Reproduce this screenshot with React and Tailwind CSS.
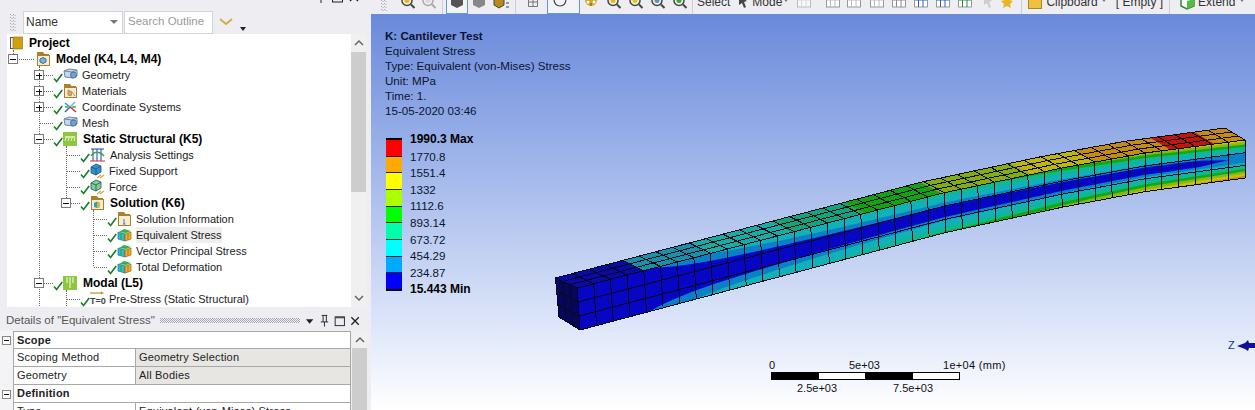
import React from "react";

const CP = [[0,577,288],[0.1213,658,267],[0.548,943,193],[0.726,1062,168],[0.85,1145,153],[1,1245,140]];
function F(t){
  for(let i=0;i<CP.length-1;i++){
    const a=CP[i],b=CP[i+1];
    if(t<=b[0]){const k=(t-a[0])/(b[0]-a[0]);return [a[1]+k*(b[1]-a[1]),a[2]+k*(b[2]-a[2])];}
  }
  return [1245,140];
}
const B=t=>{const p=F(t);return [p[0]-21.5+1.5*t,p[1]-10-2*t];};
const G=t=>{const p=F(t);return [p[0]+3-3*t,p[1]+42-4*t];};
const mix=(a,b,k)=>[a[0]+(b[0]-a[0])*k,a[1]+(b[1]-a[1])*k];
const fr=(t,v)=>mix(F(t),G(t),v);
const tp=(t,u)=>mix(B(t),F(t),u);
const LV=[[0,0.2],[0.1,1],[0.2,2],[0.32,3],[0.43,4],[0.546,5],[0.68,6],[0.775,7],[0.888,8],[1,9]];
function M(t){
  for(let i=0;i<LV.length-1;i++){
    const a=LV[i],b=LV[i+1];
    if(t<=b[0])return a[1]+(t-a[0])/(b[0]-a[0])*(b[1]-a[1]);
  }
  return 9;
}
const pts=a=>a.map(p=>p[0].toFixed(1)+","+p[1].toFixed(1)).join(" ");
const FRONT=["#0606c4","#0a80c8","#12b0b8","#10b890","#10a814","#88b810","#c8c010","#d08a10","#c81a10"];
const TOP=["#0a0aa8","#1a90a8","#17aca4","#14a47c","#12a212","#85ac10","#c0b40e","#c48c10","#c0160e"];
const VC=0.47;
const KS=[0,1.05,1.7,2.9,3.8,4.6,5.4,6.2,7];
function halfW(k,t){
  const f=1-0.27*Math.min(1,t/0.6);
  let h=KS[k]/(2*f*Math.max(M(t),0.3));
  if(k===1&&t>0.93)h*=Math.max(0,(0.975-t)/0.045);
  return h;
}
function bandPoly(k){
  const up=[],dn=[];
  for(let i=0;i<=120;i++){
    const t=i/120,h=halfW(k,t);
    up.push(fr(t,Math.max(0,VC-h)));
    dn.push(fr(t,Math.min(1,VC+h)));
  }
  return pts(up.concat(dn.reverse()));
}
const TOPB=[[0,0.1,0],[0.1,0.2,1],[0.2,0.32,2],[0.32,0.43,3],[0.43,0.546,4],[0.546,0.68,5],[0.68,0.775,6],[0.775,0.888,7],[0.888,0.955,8],[0.955,1,7]];

function Beam(){
  const n=40;
  const rng=[...Array(n+1).keys()].map(i=>i/n);
  return (
    <svg width="884" height="396" viewBox="371 14 884 396" className="absolute left-0 top-0">
      <polygon points={pts([B(0),F(0),fr(0,1),[559,317]])} fill="#06065e"/>
      <polygon points={pts([...rng.map(F),...rng.map(G).reverse()])} fill={FRONT[8]}/>
      {[8,7,6,5,4,3,2,1].map(k=><polygon key={k} points={bandPoly(k)} fill={FRONT[k-1]}/>)}
      {TOPB.map(([a,b,c],i)=>{
        const s=[];for(let j=0;j<=6;j++)s.push(a+(b-a)*j/6);
        return <polygon key={i} points={pts([...s.map(B),...s.map(F).reverse()])} fill={TOP[c]}/>;
      })}
      <g strokeWidth="1" fill="none" shapeRendering="crispEdges" stroke="#0a0a14">
        {rng.map((t,i)=><polyline key={"a"+i} points={pts([F(t),G(t)])}/>)}
        {rng.map((t,i)=><polyline key={"b"+i} points={pts([B(t),F(t)])}/>)}
        {[0,1/3,2/3,1].map((v,i)=><polyline key={"c"+i} points={pts(rng.map(t=>fr(t,v)))}/>)}
        {[0,1/3,2/3].map((u,i)=><polyline key={"d"+i} points={pts(rng.map(t=>tp(t,u)))}/>)}
        {[1/3,2/3].map((k,i)=><polyline key={"e"+i} points={pts([mix(B(0),[559,317],k),mix(F(0),G(0),k)])}/>)}
        {[1/3,2/3].map((k,i)=><polyline key={"f"+i} points={pts([mix(B(0),F(0),k),mix([559,317],G(0),k)])}/>)}
        <polyline points={pts([B(0),[559,317],G(0)])}/>
      </g>
      <path d="M1237 346 l8 -3 l3 -3 l1 3 h6 v5 h-6 l-1 3 l-3 -2 z" fill="#10109a"/>
    </svg>
  );
}

const Check=({x})=><path d={`M${x} 11.5 l2.6 3 l5.6 -7.5`} stroke="#1c8030" strokeWidth="1.7" fill="none"/>;
const Exp=({x,plus})=>(
  <g shapeRendering="crispEdges">
    <rect x={x-4.5} y="3.5" width="9" height="9" fill="#fff" stroke="#7a7a7a"/>
    <path d={`M${x-2.5} 8h6`} stroke="#111"/>
    {plus&&<path d={`M${x+0.5} 5.5v6`} stroke="#111"/>}
  </g>
);
const Cube=({x})=>(
  <g transform={`translate(${x} 0)`}>
    <path d="M1 4l5-2 8 1v6l-4 2-8-1z" fill="#c9d6e6" stroke="#6b86a8"/>
    <path d="M1 4l8 1 5-2M9 5v6" fill="none" stroke="#6b86a8"/>
    <circle cx="10.5" cy="8" r="3" fill="#6fa4d6" stroke="#47709c"/>
  </g>
);
const Folder=({x,inner})=>(
  <g transform={`translate(${x} 0)`}>
    <path d="M1 1h6l1.500 2H13v2H1z" fill="#a9812c"/>
    <rect x="1.500" y="4.500" width="12" height="10" fill="#f7ecd0" stroke="#a9812c"/>
    {inner}
  </g>
);
const Result=({x})=>(
  <g transform={`translate(${x} 0)`}>
    <path d="M7 2l7 2-5 2-7-1z" fill="#29b64a"/>
    <path d="M1 5l7 2v7l-7-2z" fill="#3bb3d8" stroke="#1c6c96" strokeWidth=".7"/>
    <path d="M8 7l6-2v7l-6 2z" fill="#e6b422" stroke="#8d6a12" strokeWidth=".7"/>
    <path d="M4 6v7" stroke="#29b64a" strokeWidth="1.500"/>
    <path d="M11 6v7" stroke="#e27a20" strokeWidth="1.500"/>
  </g>
);
const Support=({x,color})=>(
  <g transform={`translate(${x} 0)`}>
    <path d="M1 4l5-3 5 2v6l-5 3-5-2z" fill={color} stroke="#26506e" strokeWidth=".8"/>
    <path d="M1 4l5 2 5-3M6 6v6" fill="none" stroke="#26506e" strokeWidth=".8"/>
    <path d="M7 15l4-3M10 15l4-3" stroke="#d9a441" strokeWidth="1.300"/>
  </g>
);
const ICONS={
  project:<g><rect x="10.500" y="2.500" width="3" height="11" fill="#f2f2f2" stroke="#555"/><rect x="13" y="2" width="9.500" height="12" fill="#d19f0c" stroke="#8a6a08" strokeWidth=".6"/></g>,
  model:<Folder x={36} inner={<g><path d="M4 8l3-1.500 3 1.500v3l-3 1.500-3-1.500z" fill="#7fb0dc" stroke="#3a6c9c"/></g>}/>,
  geometry:<Cube x={63}/>,
  mesh:<Cube x={63}/>,
  materials:<Folder x={63} inner={<path d="M5 7l4 2-1 4-3-1z M9 9l3 4" fill="#d8a66a" stroke="#c08a50"/>}/>,
  coords:<g transform="translate(63 0)"><path d="M7 8L2 4" stroke="#2d9ad8" strokeWidth="1.600"/><path d="M7 8l5-5" stroke="#7fb0dc" strokeWidth="1.600"/><path d="M7 8l-5 5" stroke="#3a6cc0" strokeWidth="1.600"/><path d="M7 8l6 5" stroke="#d83030" strokeWidth="1.600"/><path d="M2 8h3M9 8h4" stroke="#38b048" strokeWidth="1.600"/></g>,
  static:<g transform="translate(63 0)"><rect width="14" height="14" y="1" fill="#8dc63f"/><path d="M2 6h10" stroke="#e8f5d0" strokeWidth="1.500"/><path d="M3 7l-1 3M6 7l-1 3M9 7l-1 3M12 7l-1 3" stroke="#e8f5d0"/></g>,
  modal:<g transform="translate(63 0)"><rect width="14" height="14" y="1" fill="#8dc63f"/><path d="M4 2v6M7 2v11M10 2v6" stroke="#e8f5d0" strokeWidth="1.200"/></g>,
  analysis:<g transform="translate(90 0)" fill="none"><path d="M1 2h13" stroke="#1f3fb0"/><path d="M3 2v12M7 2v12M11 2v12" stroke="#1f3fb0"/><path d="M1 9c3-5 9-5 13 0" stroke="#2aa838" strokeWidth="1.300"/><path d="M0 14h15" stroke="#c83030"/></g>,
  fixed:<Support x={90} color="#2f8fd0"/>,
  force:<Support x={90} color="#7ed08a"/>,
  solution:<Folder x={90} inner={<g><path d="M4 8l3-1.500 3 1.500v4l-3 1-3-1z" fill="#2a9ad6"/><path d="M7 7l3 1v4l-3 1z" fill="#e6b422"/></g>}/>,
  info:<Folder x={117} inner={<path d="M7 8v5M6 13h2.500" stroke="#3a78b8" fill="none"/>}/>,
  result:<Result x={117}/>,
  prestress:<g transform="translate(90 0)"><path d="M0 2h12" stroke="#b89028" strokeWidth="1.200"/><path d="M11 .5L14 2l-3 1.500z" fill="#b89028"/><text x="0" y="13" fontSize="9" fontWeight="700" fill="#444" fontFamily="Liberation Sans">T=0</text></g>,
};
const TREE=[
  {label:"Project",tx:29,bold:1,ic:"project",v:[[13,13,16]]},
  {label:"Model (K4, L4, M4)",tx:56,bold:1,ic:"model",v:[[13,0,4],[39,13,16]],h:[17,34],ex:13},
  {label:"Geometry",tx:82,ic:"geometry",v:[[39,0,16]],h:[44,54],ex:39,plus:1,ck:54},
  {label:"Materials",tx:82,ic:"materials",v:[[39,0,16]],h:[44,54],ex:39,plus:1,ck:54},
  {label:"Coordinate Systems",tx:82,ic:"coords",v:[[39,0,16]],h:[44,54],ex:39,plus:1,ck:54},
  {label:"Mesh",tx:82,ic:"mesh",v:[[39,0,16]],h:[40,54],ck:54},
  {label:"Static Structural (K5)",tx:83,bold:1,ic:"static",v:[[39,0,16],[66,13,16]],h:[44,54],ex:39,ck:54},
  {label:"Analysis Settings",tx:110,ic:"analysis",v:[[39,0,16],[66,0,16]],h:[67,81],ck:81},
  {label:"Fixed Support",tx:109,ic:"fixed",v:[[39,0,16],[66,0,16]],h:[67,81],ck:81},
  {label:"Force",tx:109,ic:"force",v:[[39,0,16],[66,0,16]],h:[67,81],ck:81},
  {label:"Solution (K6)",tx:110,bold:1,ic:"solution",v:[[39,0,16],[66,0,4],[93,13,16]],h:[71,81],ex:66,ck:81},
  {label:"Solution Information",tx:136,ic:"info",v:[[39,0,16],[93,0,16]],h:[94,108],ck:108},
  {label:"Equivalent Stress",tx:136,sel:1,ic:"result",v:[[39,0,16],[93,0,16]],h:[94,108],ck:108},
  {label:"Vector Principal Stress",tx:136,ic:"result",v:[[39,0,16],[93,0,16]],h:[94,108],ck:108},
  {label:"Total Deformation",tx:136,ic:"result",v:[[39,0,16],[93,0,8]],h:[94,108],ck:108},
  {label:"Modal (L5)",tx:83,bold:1,ic:"modal",v:[[39,0,16],[66,13,16]],h:[44,54],ex:39,ck:54},
  {label:"Pre-Stress (Static Structural)",tx:109,ic:"prestress",v:[[39,0,16],[66,0,16]],h:[67,81],ck:81},
];
function TreeRow({r}){
  const w=r.tx-7;
  return (
    <div className="flex h-4 items-center shrink-0">
      <svg width={w} height="16" viewBox={`7 0 ${w} 16`} className="shrink-0 overflow-visible">
        <g stroke="#666" strokeDasharray="1 1" shapeRendering="crispEdges" fill="none">
          {r.v.map(([x,a,b],i)=><path key={i} d={`M${x+0.5} ${a}V${b}`}/>)}
          {r.h&&<path d={`M${r.h[0]} 8.500H${r.h[1]}`}/>}
        </g>
        {r.ex&&<Exp x={r.ex-0.5} plus={r.plus}/>}
        {r.ck&&<Check x={r.ck}/>}
        {ICONS[r.ic]}
      </svg>
      <span className={`leading-4 whitespace-nowrap ${r.bold?"font-bold text-black text-[12px]":"text-[11px] text-[#1c1c1c]"} ${r.sel?"bg-[#eeeeee]":""}`}>{r.label}</span>
    </div>
  );
}
const Grip=({cls})=>(
  <svg width="6" height="18" className={cls}>
    {[...Array(6).keys()].map(i=><g key={i} fill="#a8a8b0"><rect x="0" y={i*3+1} width="1" height="1"/><rect x="3" y={i*3+1} width="1" height="1"/><rect x="1.500" y={i*3+2} width="1" height="1"/><rect x="4.500" y={i*3+2} width="1" height="1"/></g>)}
  </svg>
);
const PanelIcons=()=>(
  <svg width="66" height="14" viewBox="0 0 66 14">
    <path d="M1 5h8L5 10z" fill="#222"/>
    <path d="M18 1h6M19.500 1v7M23 1v7M17 8h8M21 8v5" stroke="#222" fill="none"/>
    <rect x="32.500" y="2.500" width="10" height="9.500" fill="none" stroke="#222"/><path d="M33 3.500h9" stroke="#222"/>
    <path d="M50 3l8 8M58 3l-8 8" stroke="#222" strokeWidth="1.400"/>
  </svg>
);
const Hatch=()=>(
  <svg width="140" height="6" className="mx-[5px] shrink-0">
    {[...Array(70).keys()].map(i=><g key={i} fill="#a8a8b0"><rect x={i*2} y="0" width="1" height="1"/><rect x={i*2+1} y="1" width="1" height="1"/><rect x={i*2} y="2" width="1" height="1"/><rect x={i*2+1} y="3" width="1" height="1"/><rect x={i*2} y="4" width="1" height="1"/></g>)}
  </svg>
);
const SB=({up})=><svg width="14" height="10" viewBox="0 0 14 10"><path d={up?"M3 7l4-4 4 4":"M3 3l4 4 4-4"} fill="none" stroke="#666" strokeWidth="1.500"/></svg>;

function Sidebar(){
  return (
    <aside className="w-[371px] shrink-0 flex flex-col bg-[#eeeef2] h-[410px] overflow-hidden">
      <div className="h-[10px] overflow-hidden shrink-0 flex justify-between pl-[6px] pr-[5px]">
        <span className="text-[12px] leading-4 -mt-[12px] text-[#444]">Outline</span>
        <div className="-mt-[10px]"><PanelIcons/></div>
      </div>
      <div className="h-[24px] shrink-0 flex items-center pl-[10px]">
        <Grip cls="mr-[7px]"/>
        <div className="w-[100px] h-[23px] bg-white border border-[#d4d4d8] flex items-center justify-between pl-[2px] pr-[4px] text-[12px] text-[#333]">
          Name
          <svg width="8" height="4"><path d="M0 0h8L4 4z" fill="#777"/></svg>
        </div>
        <div className="w-[89px] h-[23px] bg-white border border-[#d4d4d8] flex items-center pl-[3px] text-[11.5px] text-[#9a9a9a] ml-[1px]">Search Outline</div>
        <svg width="16" height="8" className="ml-[5px]"><path d="M2 1l6 5 6-5" fill="none" stroke="#d2ab4e" strokeWidth="2"/></svg>
        <svg width="8" height="6" className="ml-[5px] mt-[14px]"><path d="M1 1h6L4 5z" fill="#222"/></svg>
      </div>
      <div className="h-[273px] shrink-0 flex ml-[7px]">
        <div className="w-[344px] bg-white pt-px flex flex-col overflow-hidden">
          {TREE.map(r=><TreeRow key={r.label} r={r}/>)}
        </div>
        <div className="w-[15px] bg-[#f0f0f0] flex flex-col items-center">
          <div className="h-[18px] flex items-center"><SB up/></div>
          <div className="w-full h-[140px] bg-[#cdcdcd]"/>
          <div className="flex-1"/>
          <div className="h-[18px] flex items-center"><SB/></div>
        </div>
      </div>
      <div className="h-[21px] mt-[3px] shrink-0 flex items-center justify-between pl-[6px] pr-[5px] text-[11.5px] text-[#555]">
        <span className="whitespace-nowrap">Details of "Equivalent Stress"</span>
        <Hatch/>
        <PanelIcons/>
      </div>
      <div className="flex flex-1">
        <div className="w-[351px] flex flex-col text-[11px] text-[#222] tracking-[0.2px]">
          {[["Scope"],["Scoping Method","Geometry Selection"],["Geometry","All Bodies"],["Definition"],["Type","Equivalent (von-Mises) Stress"]].map(([a,b],i)=>(
            <div key={a} className="flex h-[18px] shrink-0 bg-[#f4f4f6]">
              <div className="w-[13px] flex items-center justify-center">
                {!b&&<svg width="9" height="9"><rect x=".5" y=".5" width="8" height="8" fill="#fff" stroke="#888"/><path d="M2 4.500h5" stroke="#111"/></svg>}
              </div>
              {b?(<>
                <div className={`w-[122px] bg-white border-l border-b border-[#a8a8a8] pl-[3px] leading-[17px] whitespace-nowrap`}>{a}</div>
                <div className={`flex-1 ${i===4?"bg-white":"bg-[#e7e6e2]"} border-l border-r border-b border-[#a8a8a8] pl-[3px] leading-[17px] whitespace-nowrap overflow-hidden`}>{b}</div>
              </>):(
                <div className={`flex-1 bg-white border border-[#a8a8a8] pl-[3px] leading-[16px] font-bold ${i?"border-t-0":""}`}>{a}</div>
              )}
            </div>
          ))}
        </div>
        <div className="w-[15px] ml-px bg-[#f0f0f0] flex flex-col items-center">
          <div className="h-[17px] flex items-center"><SB up/></div>
          <div className="w-full flex-1 bg-[#cdcdcd]"/>
        </div>
      </div>
    </aside>
  );
}

const Sep=({cls})=><div className={`w-px h-[24px] bg-[#ccced4] shrink-0 ${cls}`}/>;
const Lens=({c="#d9a520",cls})=>(
  <svg width="16" height="16" className={`shrink-0 ${cls}`}>
    <circle cx="7" cy="6.500" r="5" fill="#f6efd8" stroke="#444" strokeWidth="1.500"/>
    <circle cx="7" cy="6.500" r="2.500" fill={c}/>
    <path d="M11 10.500l3.500 3.500" stroke="#444" strokeWidth="2"/>
  </svg>
);
const TbBox=({c,cls})=>(
  <svg width="16" height="16" className={`shrink-0 ${cls}`}>
    <rect x="1.500" y="2" width="13" height="11" fill="#fff" stroke="#999"/>
    <path d="M1.500 6h13M5.500 2v11M10 2v11" stroke={c} fill="none"/>
  </svg>
);
function Toolbar(){
  return (
    <div className="h-[14px] shrink-0 overflow-hidden bg-[#eeeef2]">
      <div className="h-[24px] -mt-[10px] flex items-center text-[12px] text-[#333] whitespace-nowrap">
        <Grip cls="ml-[10px] shrink-0"/>
        <Lens cls="ml-[13px]" c="#e3b52f"/>
        <Lens cls="ml-[5px] opacity-40" c="#bbb"/>
        <Sep cls="ml-[5px]"/>
        <div className="ml-[3px] w-[22px] h-[24px] border border-[#5a9bdc] flex items-center justify-center shrink-0 bg-[#f4f4f8]">
          <svg width="14" height="16"><path d="M1 4l6-3 6 3v7l-6 3-6-3z" fill="#555"/></svg>
        </div>
        <svg width="14" height="16" className="ml-[4px] shrink-0"><path d="M1 4l6-3 6 3v7l-6 3-6-3z" fill="#888"/></svg>
        <svg width="16" height="16" className="ml-[7px] shrink-0"><path d="M1 5l5-3 5 3v6l-5 3-5-3z" fill="#b88a1e" stroke="#444"/><path d="M13 9h3M13 13h3" stroke="#444"/></svg>
        <Sep cls="ml-[6px]"/>
        <svg width="12" height="12" className="ml-[11px] shrink-0"><path d="M1.500 1.500h9v9h-9zM6 1.500v9M1.500 6h9" fill="none" stroke="#777"/></svg>
        <div className="ml-[8px] w-[33px] h-[24px] border border-[#5a9bdc] flex items-center pl-[4px] gap-[3px] shrink-0 bg-[#f4f4f8]">
          <svg width="16" height="16"><path d="M2 6c1 8 11 8 12 0" fill="none" stroke="#444" strokeWidth="1.200"/></svg>
          <svg width="6" height="4" className="-mt-[8px]"><path d="M0 0h6L3 4z" fill="#555"/></svg>
        </div>
        <svg width="16" height="16" className="ml-[3px] shrink-0"><circle cx="8" cy="6" r="6" fill="#d9a520"/><circle cx="5" cy="8" r="1.500" fill="#fff"/><circle cx="11" cy="8" r="1.500" fill="#fff"/><path d="M8 9v3" stroke="#555"/></svg>
        <Lens cls="ml-[7px]" c="#e3b52f"/>
        <Lens cls="ml-[6px]" c="#e3c52f"/>
        <Lens cls="ml-[6px]" c="#5a8fd0"/>
        <Lens cls="ml-[6px]" c="#3aa84a"/>
        <Sep cls="ml-[4px]"/>
        <span className="ml-[4px]">Select</span>
        <svg width="10" height="14" className="ml-[8px] shrink-0"><path d="M1 1l8 5-3 1 2 5-2 1-2-5-3 2z" fill="#444"/></svg>
        <span className="ml-[4px]">Mode</span>
        <svg width="6" height="4" className="ml-[1px] -mt-[5px] shrink-0"><path d="M0 0h6L3 4z" fill="#777"/></svg>
        <TbBox c="#ccc" cls="ml-[7px] opacity-60"/>
        <TbBox c="#bbb" cls="ml-[13px]"/>
        <TbBox c="#bbb" cls="ml-[5px]"/>
        <TbBox c="#bbb" cls="ml-[7px]"/>
        <TbBox c="#888" cls="ml-[6px]"/>
        <TbBox c="#2a64b8" cls="ml-[6px]"/>
        <TbBox c="#2a64b8" cls="ml-[6px]"/>
        <TbBox c="#2a8a48" cls="ml-[6px]"/>
        <svg width="10" height="14" className="ml-[10px] shrink-0"><path d="M1 1l8 5-3 1 2 5-2 1-2-5-3 2z" fill="#ccc"/></svg>
        <svg width="14" height="14" className="ml-[7px] shrink-0"><path d="M7 1l2 4 4 1-3 3 1 4-4-2-4 2 1-4-3-3 4-1z" fill="#e8b428"/></svg>
        <Sep cls="ml-[7px]"/>
        <div className="ml-[6px] w-[14px] h-[14px] bg-[#f0c040] border border-[#a88820] shrink-0"/>
        <span className="ml-[4px]">Clipboard</span>
        <svg width="6" height="4" className="ml-[3px] -mt-[5px] shrink-0"><path d="M0 0h6L3 4z" fill="#777"/></svg>
        <span className="ml-[9px]">[ Empty ]</span>
        <Sep cls="ml-[6px]"/>
        <svg width="15" height="15" className="ml-[10px] shrink-0"><path d="M1 4l6-3 7 3v7l-7 3-6-3z" fill="#fff" stroke="#2a8a30" strokeWidth="1.500"/><path d="M7 6l7-2v7l-7 3z" fill="#58b848"/></svg>
        <span className="ml-[3px]">Extend</span>
        <svg width="6" height="4" className="ml-[4px] -mt-[5px] shrink-0"><path d="M0 0h6L3 4z" fill="#777"/></svg>
        <Sep cls="ml-[12px]"/>
      </div>
    </div>
  );
}

const LEG=["#ff0000","#ffaa00","#ffff00","#aaff00","#00ff00","#00ffaa","#00ffff","#00aaff","#0000ff"];
const VALS=["1990.3 Max","1770.8","1551.4","1332","1112.6","893.14","673.72","454.29","234.87","15.443 Min"];

function Viewport(){
  return (
    <div className="flex-1 relative overflow-hidden bg-gradient-to-b from-[#6a89da] to-white">
      <Beam/>
      <div className="relative pl-[14px] pt-[14px] text-[11.6px] text-[#0c1430] leading-[15px]">
        <div className="font-bold">K: Cantilever Test</div>
        <div>Equivalent Stress</div>
        <div>Type: Equivalent (von-Mises) Stress</div>
        <div>Unit: MPa</div>
        <div>Time: 1.</div>
        <div>15-05-2020 03:46</div>
        <div className="flex mt-[13px]">
          <div className="w-[16px] ml-px border-y-[2px] border-black flex flex-col h-[153px] mt-[7px]">
            {LEG.map((c,i)=><div key={c} style={{background:c}} className={`flex-1 ${i?"border-t border-[#222]":""}`}/>)}
          </div>
          <div className="ml-[8px] flex flex-col">
            {VALS.map((v,i)=><div key={v} className={`h-[16.6px] leading-[17px] ${i===0||i===9?"font-bold text-black text-[12px]":""} ${i===9?"pt-[1px]":""}`}>{v}</div>)}
          </div>
        </div>
      </div>
      <div className="absolute left-[400px] top-[344px] w-[240px] text-[11px] leading-[14px] text-[#111]">
        <div className="flex">
          <span className="w-[80px] -ml-[2px]">0</span>
          <span className="w-[94px]">5e+03</span>
          <span className="tracking-[0.3px]">1e+04 (mm)</span>
        </div>
        <div className="flex w-[189px] h-[8px] border border-black">
          <div className="w-[47px] bg-black"/><div className="w-[46px] bg-white"/><div className="w-[48px] bg-black"/><div className="flex-1 bg-white"/>
        </div>
        <div className="flex mt-[1px]">
          <span className="ml-[26px] w-[96px]">2.5e+03</span>
          <span>7.5e+03</span>
        </div>
      </div>
      <span className="absolute left-[857px] top-[323px] text-[11px] text-[#2030a0]">Z</span>
    </div>
  );
}

export default function App(){
  return (
    <div className="w-[1255px] h-[410px] overflow-hidden flex font-['Liberation_Sans',sans-serif] bg-[#eeeef2]">
      <Sidebar/>
      <main className="flex-1 flex flex-col min-w-0">
        <Toolbar/>
        <Viewport/>
      </main>
    </div>
  );
}
